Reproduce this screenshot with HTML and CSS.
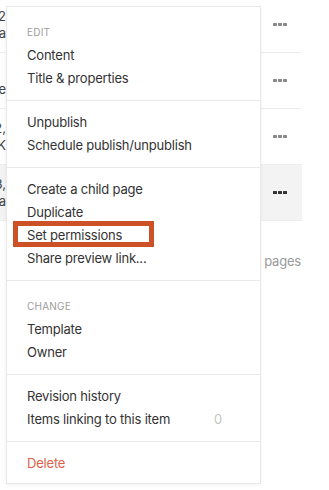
FILE: index.html
```html
<!DOCTYPE html>
<html>
<head>
<meta charset="utf-8">
<link rel="stylesheet" href="styles.css">
</head>
<body>
<div class="page">
  <div class="table">
    <div class="row">
      <div class="clip"><div class="clip-text"><span>Updated 2</span><span>by Ana</span></div></div>
      <div class="dots"><i></i><i></i><i></i></div>
    </div>
    <div class="row">
      <div class="clip"><div class="clip-text"><span>&nbsp;</span><span>Page type</span></div></div>
      <div class="dots"><i></i><i></i><i></i></div>
    </div>
    <div class="row">
      <div class="clip"><div class="clip-text"><span>Jul 2,</span><span>by K</span></div></div>
      <div class="dots"><i></i><i></i><i></i></div>
    </div>
    <div class="row row-active">
      <div class="clip"><div class="clip-text"><span>Aug 3,</span><span>by Ana</span></div></div>
      <div class="dots"><i></i><i></i><i></i></div>
    </div>
    <div class="footer-count">45 pages</div>
  </div>

  <div class="menu">
    <div class="section">
      <div class="label">EDIT</div>
      <div class="item">Content</div>
      <div class="item">Title &amp; properties</div>
    </div>
    <div class="section">
      <div class="item">Unpublish</div>
      <div class="item">Schedule publish/unpublish</div>
    </div>
    <div class="section">
      <div class="item">Create a child page</div>
      <div class="item">Duplicate</div>
      <div class="item">Set permissions</div>
      <div class="item">Share preview link...</div>
    </div>
    <div class="section">
      <div class="label">CHANGE</div>
      <div class="item">Template</div>
      <div class="item">Owner</div>
    </div>
    <div class="section">
      <div class="item">Revision history</div>
      <div class="item item-count"><span>Items linking to this item</span><span class="count">0</span></div>
    </div>
    <div class="section section-last">
      <div class="item item-danger">Delete</div>
    </div>
  </div>

  <div class="highlight"></div>
</div>
</body>
</html>
```

FILE: styles.css
```css
* { box-sizing: border-box; }
html, body { margin: 0; padding: 0; background: #fff; }
body { font-family: Inter, "Liberation Sans", Arial, sans-serif; color: #333; }

.page {
  position: relative;
  width: 329px;
  height: 490px;
  overflow: hidden;
  background: #fff;
}

.table {
  width: 302px;
  margin-top: -3px;
}

.row {
  height: 56px;
  border-bottom: 1px solid #ededed;
  display: flex;
  align-items: center;
  justify-content: space-between;
}
.row-active { background: #f3f3f3; }

.clip {
  width: 6px;
  overflow: hidden;
  display: flex;
  justify-content: flex-end;
  align-self: stretch;
  align-items: center;
}
.clip-text {
  display: flex;
  flex-direction: column;
  align-items: flex-end;
  white-space: nowrap;
  font-size: 13px;
  line-height: 17px;
  color: #444;
  flex-shrink: 0;
}

.dots {
  display: flex;
  gap: 1.5px;
  width: 37px;
  padding-left: 8px;
}
.dots i {
  width: 3.5px;
  height: 3.5px;
  background: #8a8a8a;
  border-radius: 0.5px;
}
.row-active .dots i { background: #333; }

.footer-count {
  text-align: right;
  font-size: 13px;
  letter-spacing: -0.2px;
  color: #9a9a9a;
  padding-top: 32px;
  padding-right: 1px;
}

.menu {
  position: absolute;
  left: 6px;
  top: 6px;
  width: 255px;
  background: #fff;
  border: 1px solid #e9e9e9;
  box-shadow: 0 1px 4px rgba(0, 0, 0, 0.06);
  z-index: 2;
}

.section {
  padding: 10px 0;
  border-top: 1px solid #e9e9e9;
}
.section:first-child { border-top: 0; }
.section-last { padding-bottom: 8px; }

.label {
  padding: 4px 20px 0;
  line-height: 23px;
  font-size: 10px;
  letter-spacing: 0.2px;
  color: #9d9d9d;
}

.item {
  padding: 0 20px;
  line-height: 23px;
  font-size: 13px;
  letter-spacing: -0.2px;
  color: #333;
  white-space: nowrap;
}
.item-count {
  display: flex;
  justify-content: space-between;
  padding-right: 38px;
}
.count { color: #c4c4c4; }
.item-danger { color: #dd604b; }

.highlight {
  position: absolute;
  left: 13px;
  top: 221px;
  width: 141px;
  height: 26px;
  border: 5px solid #cd5126;
  z-index: 3;
}
```
